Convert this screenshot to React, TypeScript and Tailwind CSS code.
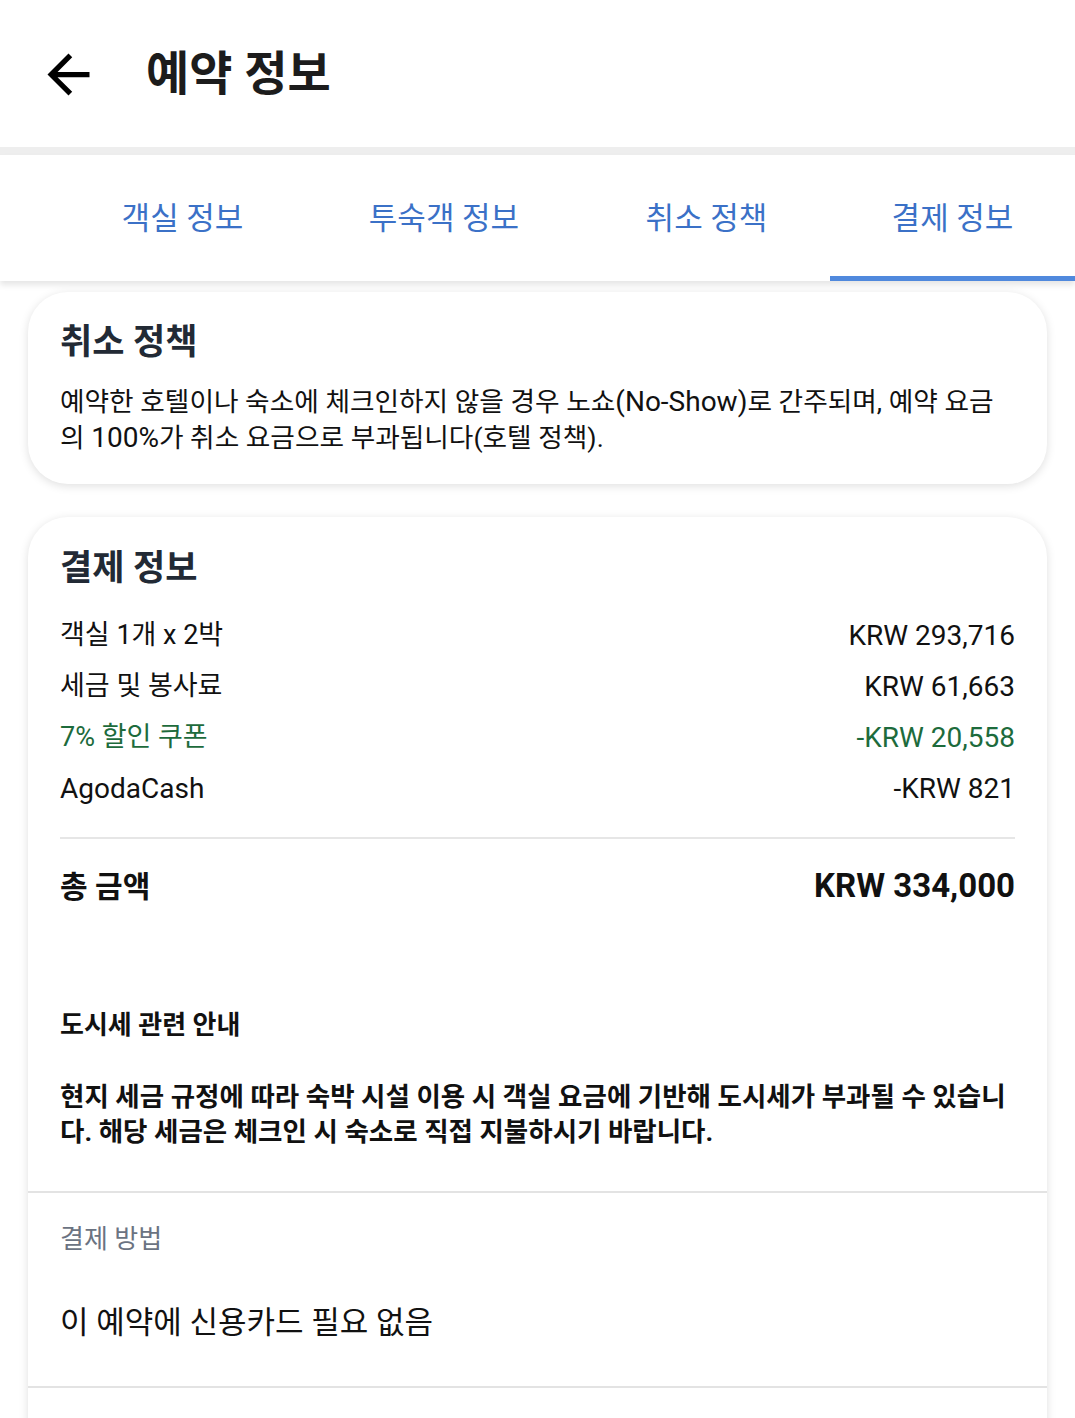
import React from 'react';

const font = { fontFamily: 'Roboto, "Noto Sans CJK KR", sans-serif' };

const tabs = [
  { label: '객실 정보', w: 'w-[245px]' },
  { label: '투숙객 정보', w: 'w-[278px]' },
  { label: '취소 정책', w: 'w-[247px]' },
  { label: '결제 정보', w: 'w-[245px]', active: true },
];

const rows = [
  { label: '객실 1개 x 2박', value: 'KRW 293,716' },
  { label: '세금 및 봉사료', value: 'KRW 61,663' },
  { label: '7% 할인 쿠폰', value: '-KRW 20,558', green: true },
  { label: 'AgodaCash', value: '-KRW 821', latin: true },
];

const BackArrow = () => (
  <svg viewBox="0 0 24 24" className="w-[63px] h-[63px]" fill="#000">
    <path d="M20 11H7.83l5.59-5.59L12 4l-8 8 8 8 1.41-1.41L7.83 13H20v-2z" />
  </svg>
);

export default function App() {
  return (
    <div className="w-[1075px] h-[1418px] overflow-hidden bg-white text-[#111]" style={font}>
      {/* Header */}
      <header className="h-[147px] flex items-center bg-white">
        <button className="ml-[37px] mt-[1px]">
          <BackArrow />
        </button>
        <h1 className="ml-[46px] text-[47px] font-bold text-[#1c1c1c] leading-none">예약 정보</h1>
      </header>
      <div className="h-[8px] bg-[#eeeeee]" />

      {/* Tabs */}
      <nav className="relative z-10 flex pl-[60px] h-[126px] bg-white shadow-[0_4px_6px_rgba(0,0,0,0.10)]">
        {tabs.map((t) => (
          <div key={t.label} className={`${t.w} relative flex items-center justify-center`}>
            <span className="text-[31px] text-[#3b71c7] leading-none">{t.label}</span>
            {t.active && <div className="absolute left-0 right-0 bottom-0 h-[5px] bg-[#5089dd]" />}
          </div>
        ))}
      </nav>

      <main className="px-[28px] pt-[11px]">
        {/* Cancellation policy */}
        <section className="rounded-[40px] bg-white shadow-[0_2px_10px_rgba(0,0,0,0.13)] px-[32px] pt-[28px] pb-[28px]">
          <h2 className="text-[35px] font-bold text-[#222a35] leading-[46px]">취소 정책</h2>
          <p className="mt-[18px] text-[26.7px] leading-[36px] text-[#111]">
            예약한 호텔이나 숙소에 체크인하지 않을 경우 노쇼<span className="text-[28px] leading-none">(No-Show)</span>로 간주되며, 예약 요금의{' '}
            <span className="text-[28px] leading-none">100%</span>가 취소 요금으로 부과됩니다(호텔 정책).
          </p>
        </section>

        {/* Payment info */}
        <section className="mt-[33px] rounded-t-[40px] bg-white shadow-[0_2px_10px_rgba(0,0,0,0.13)] pb-[80px]">
          <div className="px-[32px] pt-[28px]">
            <h2 className="text-[35px] font-bold text-[#222a35] leading-[48px]">결제 정보</h2>
            <div className="mt-[17px]">
              {rows.map((r) => (
                <div
                  key={r.label}
                  className={`h-[51px] flex items-center justify-between ${
                    r.green ? 'text-[#1d6b3c]' : 'text-[#111]'
                  }`}
                >
                  <span className={r.latin ? 'text-[28px]' : 'text-[27px]'}>{r.label}</span>
                  <span className="text-[28px]">{r.value}</span>
                </div>
              ))}
            </div>
            <div className="mt-[23px] h-[2px] bg-[#e6e6e6]" />
            <div className="mt-[23px] h-[48px] flex items-center justify-between">
              <span className="text-[30px] font-bold text-[#111]">총 금액</span>
              <span className="text-[33px] font-bold text-[#111]">KRW 334,000</span>
            </div>
            <h3 className="mt-[97px] text-[26px] font-bold leading-[36px] text-[#111]">도시세 관련 안내</h3>
            <p className="mt-[36px] text-[26.5px] font-bold leading-[35px] text-[#111]">
              현지 세금 규정에 따라 숙박 시설 이용 시 객실 요금에 기반해 도시세가 부과될 수 있습니다. 해당 세금은 체크인 시 숙소로 직접 지불하시기 바랍니다.
            </p>
          </div>
          <div className="mt-[42px] h-[2px] bg-[#e3e3e3]" />
          <div className="px-[32px] pt-[28px] pb-[43px]">
            <div className="text-[26px] leading-[36px] text-[#6b7382]">결제 방법</div>
            <div className="mt-[46px] text-[31px] leading-[40px] text-[#111]">이 예약에 신용카드 필요 없음</div>
          </div>
          <div className="h-[2px] bg-[#e3e3e3]" />
        </section>
      </main>
    </div>
  );
}
